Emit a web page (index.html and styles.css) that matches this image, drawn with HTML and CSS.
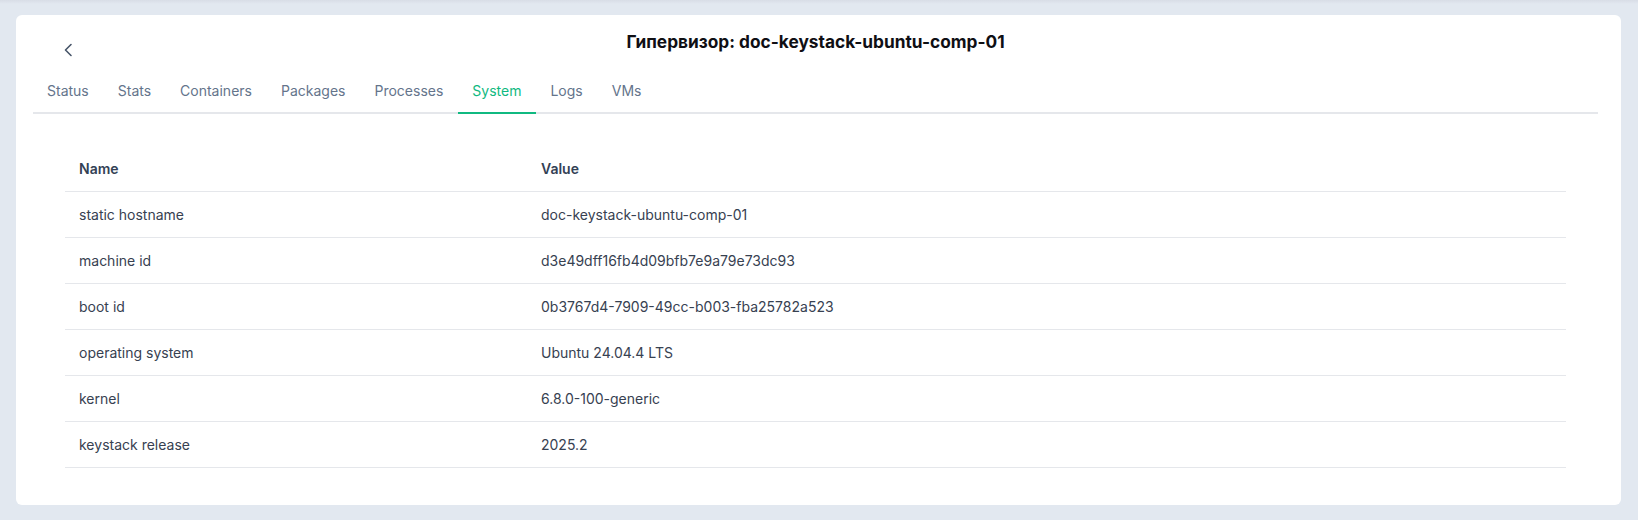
FILE: index.html
```html
<!DOCTYPE html>
<html lang="ru">
<head>
    <meta charset="UTF-8">
    <meta name="viewport" content="width=device-width, initial-scale=1.0">
    <title>Гипервизор: doc-keystack-ubuntu-comp-01</title>
    <link rel="stylesheet" href="styles.css">
</head>
<body>
    <div class="card">
        <div class="header">
            <button class="back" title="Back">
                <svg width="24" height="24" viewBox="0 0 24 24" fill="none" stroke="currentColor" stroke-width="1.6" stroke-linecap="round" stroke-linejoin="round">
                    <path d="M15 6.5L9.5 12L15 17.5"/>
                </svg>
            </button>
            <h1 class="title">Гипервизор: doc-keystack-ubuntu-comp-01</h1>
            <div></div>
        </div>

        <div class="tabs">
            <a class="tab">Status</a>
            <a class="tab">Stats</a>
            <a class="tab">Containers</a>
            <a class="tab">Packages</a>
            <a class="tab">Processes</a>
            <a class="tab active">System</a>
            <a class="tab">Logs</a>
            <a class="tab">VMs</a>
        </div>

        <div class="panel">
            <table class="info">
                <thead>
                    <tr><th class="col-name">Name</th><th>Value</th></tr>
                </thead>
                <tbody>
                    <tr><td>static hostname</td><td>doc-keystack-ubuntu-comp-01</td></tr>
                    <tr><td>machine id</td><td>d3e49dff16fb4d09bfb7e9a79e73dc93</td></tr>
                    <tr><td>boot id</td><td>0b3767d4-7909-49cc-b003-fba25782a523</td></tr>
                    <tr><td>operating system</td><td>Ubuntu 24.04.4 LTS</td></tr>
                    <tr><td>kernel</td><td>6.8.0-100-generic</td></tr>
                    <tr><td>keystack release</td><td>2025.2</td></tr>
                </tbody>
            </table>
        </div>
    </div>
</body>
</html>
```

FILE: styles.css
```css
body {
    margin: 0;
    padding: 15px 17px 15px 16px;
    background: linear-gradient(#d8dde6, #e2e8f0 4px);
    background-color: #e2e8f0;
    font-family: Inter, "Noto Sans", Arial, sans-serif;
    font-size: 14px;
    color: #374151;
}
.card {
    background: #fff;
    border-radius: 6px;
    height: 490px;
    box-sizing: border-box;
    padding: 0 23px 0 17px;
}
.header {
    display: grid;
    grid-template-columns: 1fr auto 1fr;
    align-items: start;
    height: 55px;
}
.back {
    margin: 23px 0 0 22.5px;
    width: 24px;
    height: 24px;
    padding: 0;
    border: none;
    background: none;
    color: #475569;
    cursor: pointer;
    display: flex;
}
.title {
    margin: 15px 0 0;
    font-size: 17.3px;
    line-height: 24px;
    font-weight: 700;
    color: #0f0f14;
}
.tabs {
    display: flex;
    border-bottom: 2px solid #e5e7eb;
}
.tab {
    padding: 11px 14.5px;
    line-height: 20px;
    color: #64748b;
    border-bottom: 2px solid transparent;
    margin-bottom: -2px;
    cursor: pointer;
}
.tab:first-child {
    padding-left: 14px;
}
.tab.active {
    color: #10b981;
    border-bottom-color: #10b981;
}
.panel {
    padding: 32px 32px 0;
}
.info {
    width: 100%;
    border-collapse: separate;
    border-spacing: 0;
}
.info th,
.info td {
    text-align: left;
    padding: 13px 14px 12px;
    line-height: 20px;
    border-bottom: 1px solid #e5e7eb;
}
.info th {
    font-weight: 600;
    color: #334155;
}
.col-name {
    width: 434px;
}
```
